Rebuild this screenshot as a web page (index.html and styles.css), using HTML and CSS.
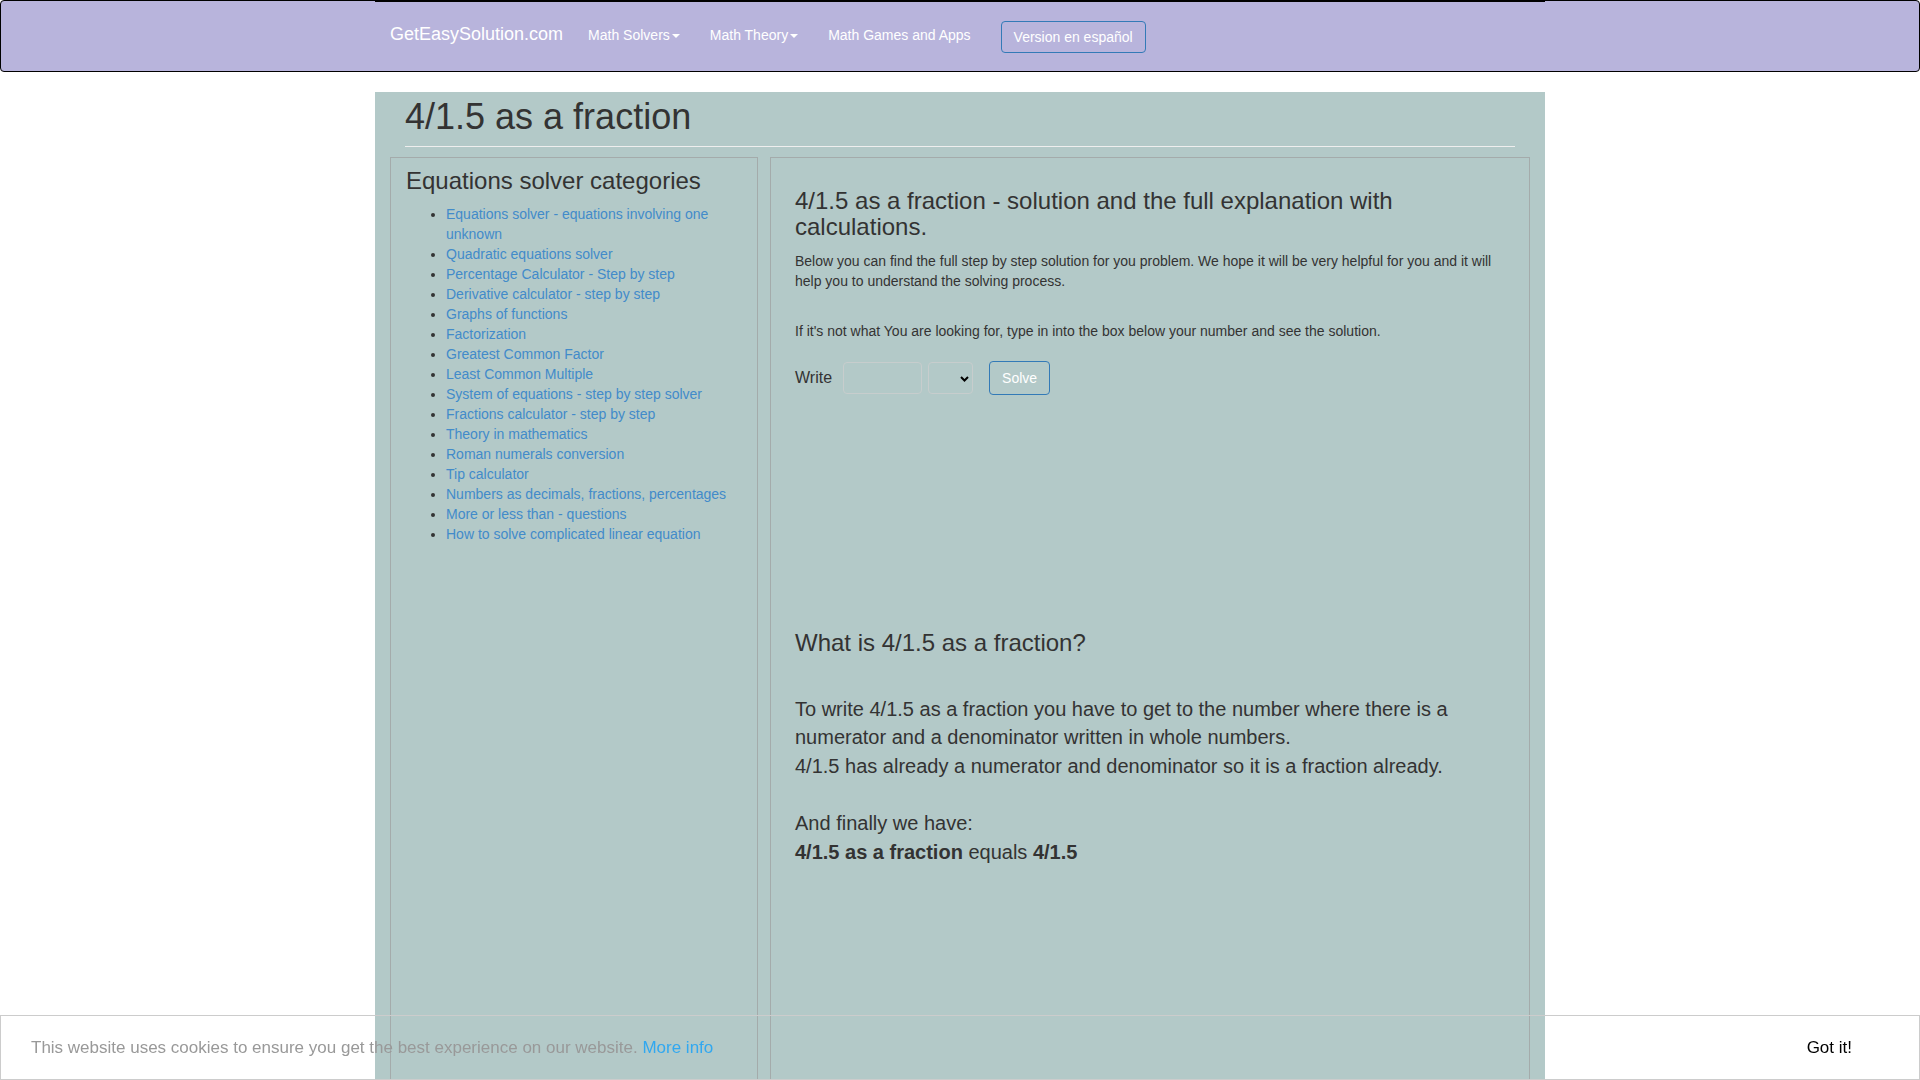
FILE: index.html
```html
<!DOCTYPE html>
<html lang="en">
<head>
<meta charset="utf-8">
<title>4/1.5 as a fraction</title>
<link rel="stylesheet" href="styles.css">
</head>
<body>
<nav class="navbar">
  <div class="nav-inner">
    <a class="brand" href="#">GetEasySolution.com</a>
    <ul class="nav-links">
      <li><a href="#">Math Solvers<span class="caret"></span></a></li>
      <li><a href="#">Math Theory<span class="caret"></span></a></li>
      <li><a href="#">Math Games and Apps</a></li>
    </ul>
    <button class="btn-lang" type="button">Version en español</button>
  </div>
</nav>

<div class="container">
  <div class="page-header">
    <h1>4/1.5 as a fraction</h1>
  </div>
  <div class="row">
    <aside class="panel side">
      <h3>Equations solver categories</h3>
      <ul>
        <li><a href="#">Equations solver - equations involving one unknown</a></li>
        <li><a href="#">Quadratic equations solver</a></li>
        <li><a href="#">Percentage Calculator - Step by step</a></li>
        <li><a href="#">Derivative calculator - step by step</a></li>
        <li><a href="#">Graphs of functions</a></li>
        <li><a href="#">Factorization</a></li>
        <li><a href="#">Greatest Common Factor</a></li>
        <li><a href="#">Least Common Multiple</a></li>
        <li><a href="#">System of equations - step by step solver</a></li>
        <li><a href="#">Fractions calculator - step by step</a></li>
        <li><a href="#">Theory in mathematics</a></li>
        <li><a href="#">Roman numerals conversion</a></li>
        <li><a href="#">Tip calculator</a></li>
        <li><a href="#">Numbers as decimals, fractions, percentages</a></li>
        <li><a href="#">More or less than - questions</a></li>
        <li><a href="#">How to solve complicated linear equation</a></li>
      </ul>
    </aside>
    <main class="panel main">
      <h3>4/1.5 as a fraction - solution and the full explanation with calculations.</h3>
      <p>Below you can find the full step by step solution for you problem. We hope it will be very helpful for you and it will help you to understand the solving process.</p>
      <br>
      <p>If it's not what You are looking for, type in into the box below your number and see the solution.</p>
      <form class="solve-form">
        <span class="write">Write</span>
        <input class="num-input" type="text">
        <span class="select-wrap">
          <select class="unit-select"><option></option></select>
          <svg class="chev" width="9" height="6" viewBox="0 0 9 6"><path d="M1 1 L4.5 4.5 L8 1" fill="none" stroke="#000" stroke-width="2"/></svg>
        </span>
        <button class="btn-solve" type="button">Solve</button>
      </form>
      <div class="ad-slot"></div>
      <h3>What is 4/1.5 as a fraction?</h3>
      <div class="answer">
        <br>To write 4/1.5 as a fraction you have to get to the number where there is a numerator and a denominator written in whole numbers.<br>4/1.5 has already a numerator and denominator so it is a fraction already.<br><br>And finally we have:<br><b>4/1.5 as a fraction</b> equals <b>4/1.5</b>
      </div>
    </main>
  </div>
</div>

<div class="cookie">
  <span class="cookie-msg">This website uses cookies to ensure you get the best experience on our website. <a href="#">More info</a></span>
  <a class="cookie-btn" href="#">Got it!</a>
</div>
</body>
</html>
```
FILE: styles.css
```css
body {
  margin: 0;
  font-family: "Liberation Sans", Arial, Helvetica, sans-serif;
  font-size: 14px;
  line-height: 20px;
  color: #333;
  background: #fff;
}

a {
  color: #428bca;
  text-decoration: none;
}

/* Navbar */
.navbar {
  border: 1px solid #000;
  border-radius: 4px;
  background: #b8b4dc;
  margin-bottom: 20px;
}

.nav-inner {
  width: 1170px;
  margin: 0 auto;
  box-sizing: border-box;
  height: 70px;
  border-top: 1px solid #000;
  padding-top: 22px;
  display: flex;
  align-items: flex-start;
}

.brand {
  font-size: 18px;
  line-height: 20px;
  color: #fff;
  padding: 0 10px 0 15px;
}

.nav-links {
  list-style: none;
  margin: 0;
  padding: 0;
  display: flex;
}

.nav-links a {
  display: block;
  padding: 1px 15px 0;
  color: #fff;
  line-height: 20px;
}

.caret {
  display: inline-block;
  width: 0;
  height: 0;
  margin-left: 2px;
  vertical-align: middle;
  border-top: 4px solid #fff;
  border-left: 4px solid transparent;
  border-right: 4px solid transparent;
}

.btn-lang {
  margin: -3px 0 0 15px;
  padding: 5px 12px;
  font-family: "Liberation Sans", Arial, sans-serif;
  font-size: 14px;
  line-height: 20px;
  color: #fff;
  background: transparent;
  border: 1px solid #337ab7;
  border-radius: 4px;
}

/* Main container */
.container {
  width: 1170px;
  margin: 0 auto;
  background: #b3c9c8;
  min-height: 1000px;
}

.page-header {
  margin: 0 30px;
  padding-top: 5px;
  padding-bottom: 9px;
  border-bottom: 1px solid #eee;
}

.page-header h1 {
  margin: 0;
  font-size: 36px;
  line-height: 40px;
  font-weight: normal;
}

.row {
  display: flex;
  gap: 12px;
  padding: 0 15px;
  margin-top: 10px;
  align-items: stretch;
}

.panel {
  border: 1px solid #a4abab;
  min-height: 960px;
}

.panel h3 {
  font-size: 24px;
  line-height: 26.4px;
  font-weight: normal;
  color: #333;
}

.side {
  width: 368px;
  flex: none;
  box-sizing: border-box;
  padding: 0 15px;
}

.side h3 {
  margin: 10px 0 10px;
}

.side ul {
  margin: 0;
  padding-left: 40px;
}

.main {
  flex: 1;
  padding: 0 24px;
}

.main h3 {
  margin: 30px 0 10px;
}

.main p {
  margin: 0 0 10px;
}

.solve-form {
  display: flex;
  align-items: center;
  margin: 20px 0 0;
}

.write {
  font-size: 16px;
  margin-right: 11px;
}

.num-input {
  width: 79px;
  height: 32px;
  box-sizing: border-box;
  border: 1px solid #c7cdcd;
  border-radius: 4px;
  background: transparent;
  margin: 0 6px 0 0;
  padding: 0 6px;
}

.select-wrap {
  position: relative;
  width: 45px;
  height: 32px;
  margin-right: 16px;
}

.unit-select {
  appearance: none;
  -webkit-appearance: none;
  width: 45px;
  height: 32px;
  box-sizing: border-box;
  border: 1px solid #c7cdcd;
  border-radius: 4px;
  background: transparent;
  margin: 0;
}

.chev {
  position: absolute;
  left: 32px;
  top: 14px;
}

.btn-solve {
  height: 34px;
  padding: 6px 12px;
  font-family: "Liberation Sans", Arial, sans-serif;
  font-size: 14px;
  line-height: 20px;
  color: #fff;
  background: transparent;
  border: 1px solid #337ab7;
  border-radius: 4px;
}

.ad-slot {
  height: 205px;
}

.answer {
  font-size: 20px;
  line-height: 28.57px;
}

/* Cookie bar */
.cookie {
  position: fixed;
  left: 0;
  right: 0;
  bottom: 0;
  height: 65px;
  box-sizing: border-box;
  border: 1px solid #ccc;
  display: flex;
  align-items: center;
  justify-content: space-between;
  padding: 0 67px 0 30px;
  font-size: 17px;
  line-height: 24px;
  color: #999;
}

.cookie-msg a {
  color: #31a8f0;
}

.cookie-btn {
  color: #000;
}
```
